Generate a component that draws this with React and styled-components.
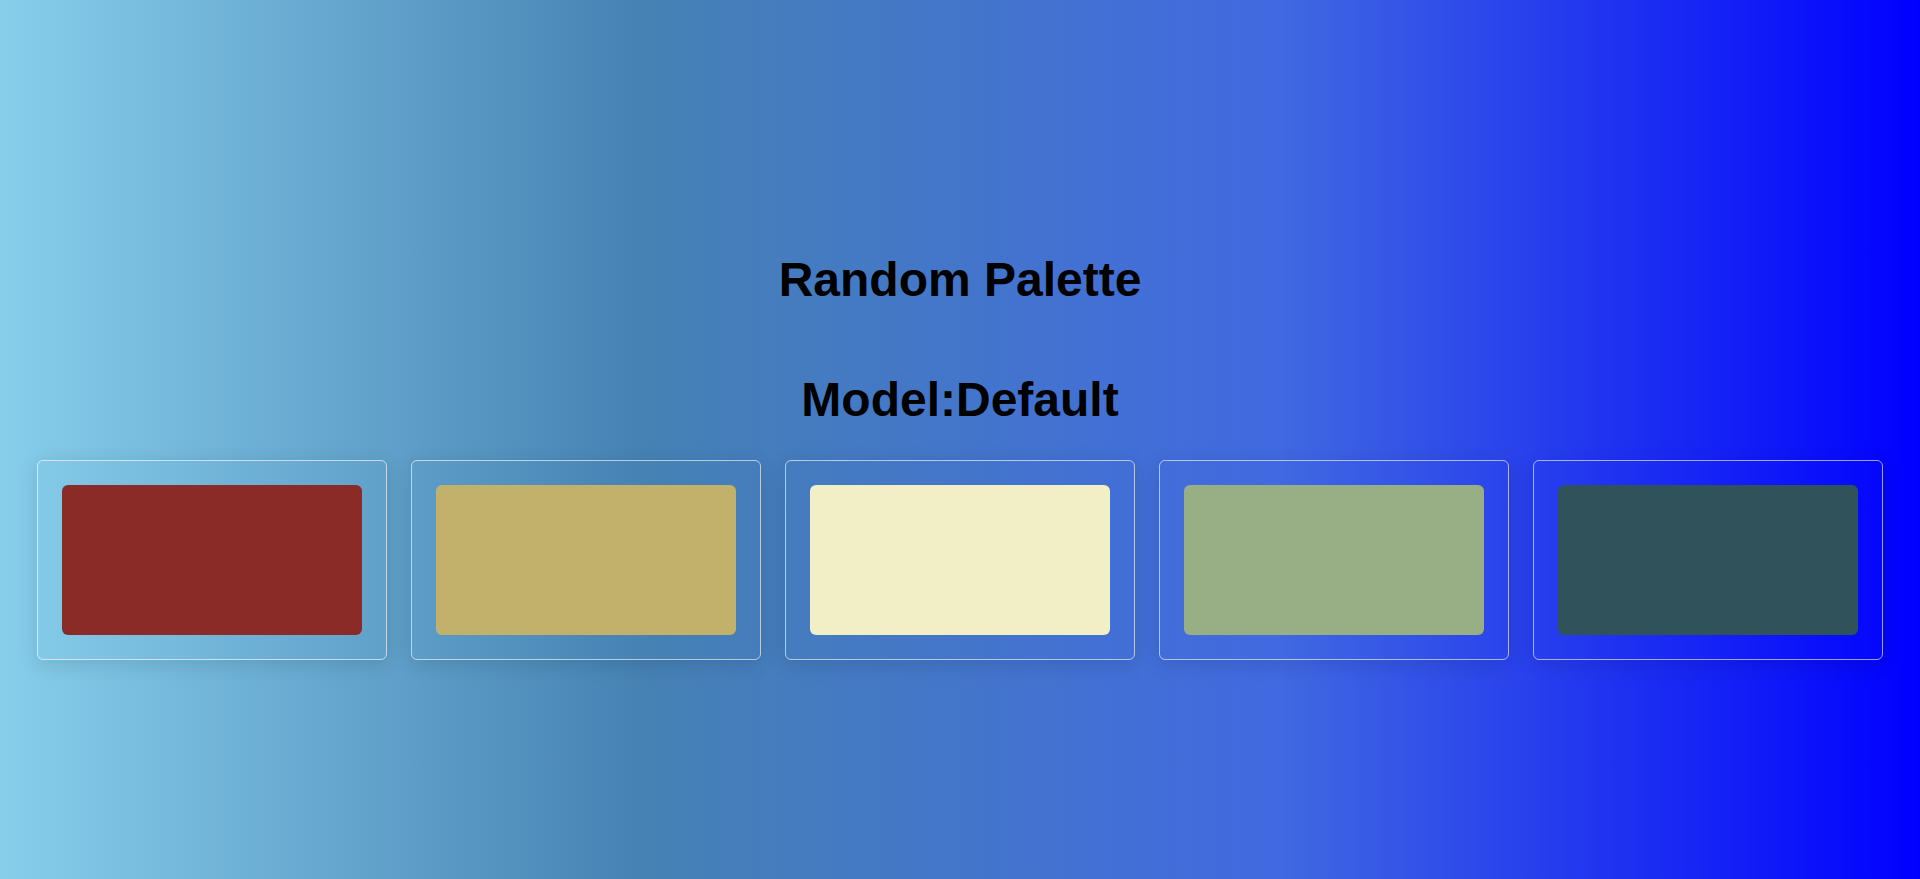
import styled, { createGlobalStyle } from "styled-components";

const GlobalStyle = createGlobalStyle`
  html, body {
    margin: 0;
    padding: 0;
  }
  body {
    font-family: "Liberation Sans", Arial, sans-serif;
    background: linear-gradient(to right, skyblue, steelblue, royalblue, blue);
    min-height: 100vh;
  }
`;

const Page = styled.div`
  min-height: 100vh;
  box-sizing: border-box;
  padding-top: 252px;
  display: flex;
  flex-direction: column;
  align-items: center;
`;

const Title = styled.h1`
  margin: 0 0 65px;
  font-size: 48px;
  font-weight: 700;
  color: #000;
  text-align: center;
`;

const Subtitle = styled.h2`
  margin: 0 0 33px;
  font-size: 48px;
  font-weight: 700;
  color: #000;
  text-align: center;
`;

const PaletteRow = styled.div`
  display: flex;
  justify-content: center;
  gap: 24px;
`;

const Card = styled.div`
  padding: 24px;
  border: 1px solid rgba(255, 255, 255, 0.6);
  border-radius: 6px;
  box-shadow: 0 4px 20px rgba(0, 0, 0, 0.12);
`;

const Swatch = styled.div`
  width: 300px;
  height: 150px;
  border-radius: 6px;
  background-color: ${(p) => p.$color};
`;

const colors = ["#8b2b28", "#c2b16a", "#f2efc6", "#98af86", "#30525b"];

function App() {
  return (
    <>
      <GlobalStyle />
      <Page>
        <Title>Random Palette</Title>
        <Subtitle>Model:Default</Subtitle>
        <PaletteRow>
          {colors.map((c) => (
            <Card key={c}>
              <Swatch $color={c} />
            </Card>
          ))}
        </PaletteRow>
      </Page>
    </>
  );
}

export default App;
